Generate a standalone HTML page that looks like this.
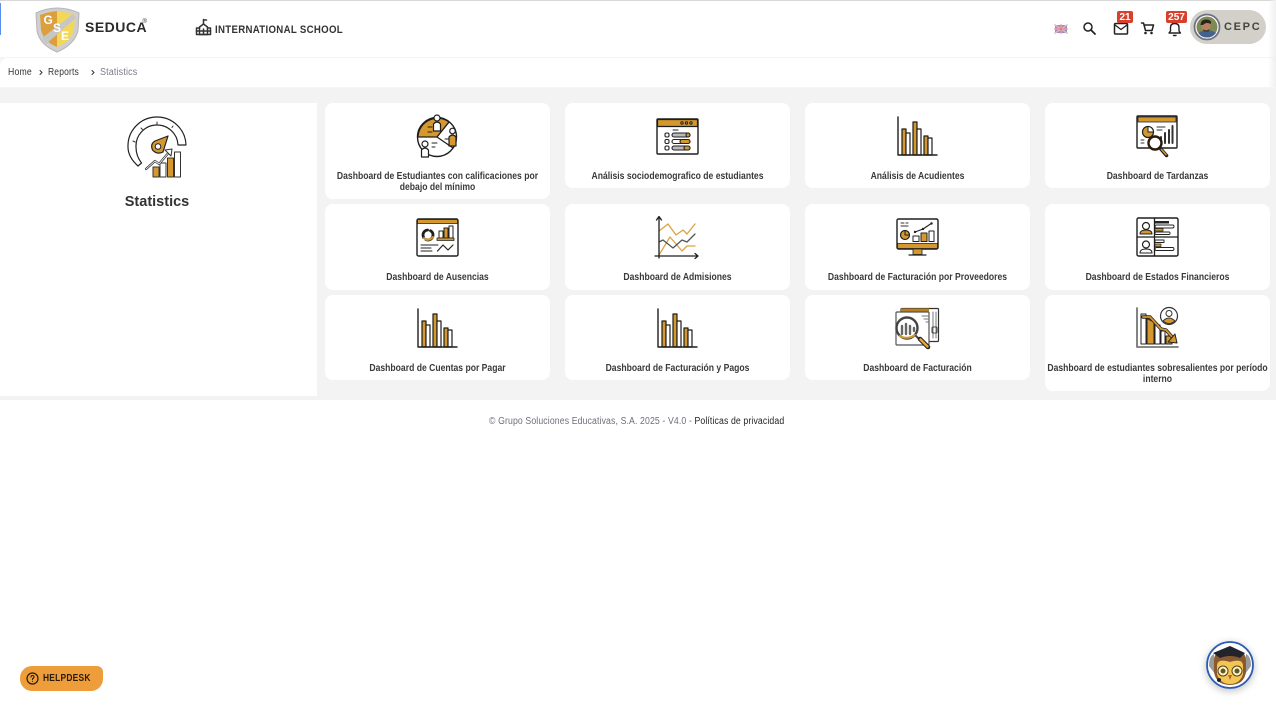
<!DOCTYPE html>
<html lang="en"><head><meta charset="utf-8"><title>Statistics</title>
<style>
*{box-sizing:border-box}
html,body{margin:0;padding:0;width:1276px;height:712px;overflow:hidden;background:#fff;font-family:"Liberation Sans",sans-serif}
.a{position:absolute}
.t{position:absolute;white-space:nowrap;line-height:1;transform-origin:0 50%}
.card{position:absolute;width:224.500px;background:#fff;border-radius:8px}
.lb{position:absolute;width:305px;margin-left:-40px;text-align:center;font-size:10.300px;line-height:11px;font-weight:700;color:#3a3a3a;white-space:nowrap;transform:scaleX(.835);transform-origin:50% 50%}
.badge{position:absolute;height:12px;background:#d8402e;border-radius:2px;color:#fff;font-size:10px;font-weight:700;line-height:13px;text-align:center}
svg{position:absolute;left:0;top:0}
</style></head><body>
<div class="a" style="left:0;top:0;width:1276px;height:1px;background:#d8d8d8"></div>
<div class="a" style="left:0;top:3px;width:1px;height:32px;background:#5b8def"></div>
<div class="a" style="left:0;top:87px;width:1276px;height:313px;background:#f3f3f3"></div>
<div class="a" style="left:0;top:57px;width:1276px;height:31px;background:#f5f5f5"></div>
<div class="a" style="left:0;top:58px;width:1276px;height:29px;background:#fff;border-radius:8px 8px 0 0"></div>
<div class="a" style="left:0;top:103px;width:317px;height:293px;background:#fff"></div>
<div class="a" style="left:1268px;top:0;width:8px;height:87px;background:linear-gradient(to right,rgba(240,240,240,0),#f0f0f0)"></div>

<div class="card" style="left:325px;top:103px;height:96px"></div>
<div class="card" style="left:565px;top:103px;height:85px"></div>
<div class="card" style="left:805px;top:103px;height:85px"></div>
<div class="card" style="left:1045px;top:103px;height:85px"></div>
<div class="card" style="left:325px;top:204px;height:86px"></div>
<div class="card" style="left:565px;top:204px;height:86px"></div>
<div class="card" style="left:805px;top:204px;height:86px"></div>
<div class="card" style="left:1045px;top:204px;height:86px"></div>
<div class="card" style="left:325px;top:295px;height:85px"></div>
<div class="card" style="left:565px;top:295px;height:85px"></div>
<div class="card" style="left:805px;top:295px;height:85px"></div>
<div class="card" style="left:1045px;top:295px;height:96px"></div>

<div class="a" style="left:20px;top:666px;width:83px;height:25px;background:#ee9d3b;border-radius:12px 6px 12px 12px"></div>
<div class="a" style="left:1206px;top:641px;width:48px;height:48px;border-radius:50%;box-shadow:0 2px 8px rgba(0,0,0,.25)"></div>
<div class="a" style="left:1190px;top:10px;width:76px;height:34px;border-radius:17px;background:#d3d0c9"></div>

<svg width="1276" height="712" viewBox="0 0 1276 712" fill="none" stroke-linecap="round" stroke-linejoin="round">
<defs>
<g id="bars" stroke="#1e1e1e" stroke-width="1.2">
<rect x="-15" y="-26" width="4" height="26" fill="#d4982f"/>
<rect x="-11" y="-22" width="4" height="22" fill="#fff"/>
<rect x="-4" y="-33" width="4" height="33" fill="#d4982f"/>
<rect x="0" y="-26" width="4" height="26" fill="#fff"/>
<rect x="7" y="-19" width="4" height="19" fill="#d4982f"/>
<rect x="11" y="-17" width="4" height="17" fill="#fff"/>
<path d="M-19-38V0H20" stroke-width="1.400"/>
</g>
</defs>

<!-- shield logo -->
<path d="M36 13Q57 3 79 13L78 31Q74 45 57 52Q40 45 37 31Z" fill="#cfcfcf" stroke="#b5b5b5"/>
<path d="M40 15Q48 12 57 11V47Q44 42 41 30Z" fill="#dc9f3e"/>
<path d="M57 11Q66 12 75 15L74 30Q70 42 57 47Z" fill="#f3d857"/>
<path d="M73 14 76 18 46 44 42 38Z" fill="#c6c6c6"/>
<text x="43.500" y="24" font-family="Liberation Sans" font-size="12" font-weight="700" fill="#fff">G</text>
<text x="53" y="32" font-family="Liberation Sans" font-size="12" font-weight="700" fill="#fff">S</text>
<text x="61" y="40" font-family="Liberation Sans" font-size="12" font-weight="700" fill="#fff">E</text>

<!-- school -->
<g stroke="#333" stroke-width="1.500">
<path d="M203.500 19.500V24M203.500 20H206.500"/><path d="M199.500 27 203.500 24 207.500 27V34.500H199.500Z"/><path d="M199.500 28H196.500V34.500H210.500V28H207.500"/><path d="M196.500 31H210.500M203.500 29V34"/>
</g>

<!-- breadcrumbs chevrons -->
<path d="M40 70.500 42 72.500 40 74.500M92 70.500 94 72.500 92 74.500" stroke="#333" stroke-width="1"/>

<!-- flag -->
<rect x="1055" y="25" width="12" height="8" fill="#8b8fc4"/>
<path d="M1055 25 1067 33M1067 25 1055 33" stroke="#e7b5bd" stroke-width="1.600"/>
<path d="M1061 25V33M1055 29H1067" stroke="#f0c3c8" stroke-width="2"/>
<path d="M1061 25V33M1055 29H1067" stroke="#c9566a" stroke-width=".8"/>

<!-- search -->
<circle cx="1088" cy="27" r="4" stroke="#222" stroke-width="1.500"/><path d="M1091 30 1095 34" stroke="#222" stroke-width="1.800"/>
<!-- mail -->
<rect x="1114.500" y="23.500" width="13" height="10.500" rx="1" stroke="#222" stroke-width="1.500"/><path d="M1115 25 1121 29.500 1127 25" stroke="#222" stroke-width="1.300"/>
<!-- cart -->
<path d="M1141.500 23H1143.500L1145.500 30.500H1152L1153.500 25H1144.500" stroke="#222" stroke-width="1.500"/>
<circle cx="1145.500" cy="33" r="1.300" fill="#222"/><circle cx="1151.500" cy="33" r="1.300" fill="#222"/>
<!-- bell -->
<path d="M1169 33H1180.500L1179 31V27.500Q1179 23.500 1174.700 23.500Q1170.500 23.500 1170.500 27.500V31Z" stroke="#222" stroke-width="1.400"/><path d="M1173.500 35.500H1176" stroke="#222" stroke-width="1.400"/>

<!-- avatar -->
<circle cx="1207" cy="27" r="13" fill="#fff"/>
<circle cx="1207" cy="27" r="12.500" stroke="#6c7284" stroke-width="1.800"/>
<circle cx="1207" cy="27" r="10.500" fill="#7d8a55"/>
<path d="M1198.500 33Q1207 27 1216 33Q1212 38 1207 37.500Q1201 37.500 1198.500 33Z" fill="#44638c"/>
<circle cx="1206" cy="26" r="4.800" fill="#b5835e"/>
<path d="M1200.500 25Q1201 19 1207 19.500Q1212 20 1211 24Q1206 21.500 1203 25Z" fill="#2a2521"/>
<path d="M1203 29Q1206 32 1209.500 29L1208.500 31.500H1204Z" fill="#3a2e26"/>

<!-- statistics icon -->
<path d="M138 166Q128 157 128 147A29 29 0 0 1 186 145H178A21 21 0 0 0 136 147Q136 156 141.500 163Z" fill="#fff" stroke="#222" stroke-width="1.200"/>
<path d="M157 122V124M141 128 142.500 129.500M133 141 135 142M173 126 172 127.500" stroke="#333" stroke-width="1"/>
<path d="M168 136 163 152Q157 155 152.500 150Q150 144 155 141Z" fill="#d4982f" stroke="#222" stroke-width="1.200"/>
<circle cx="158" cy="146.500" r="2.800" fill="#fff" stroke="#222"/>
<rect x="153" y="167" width="6" height="10" fill="#d4982f" stroke="#333"/>
<rect x="160" y="163" width="6" height="14" fill="#fff" stroke="#333"/>
<rect x="167.500" y="158" width="6" height="19" fill="#d4982f" stroke="#333"/>
<rect x="174.500" y="152" width="6" height="25" fill="#fff" stroke="#333"/>
<path d="M146 169 155 161 159 164 170 151" stroke="#333" stroke-width="2.200"/><path d="M146 169 155 161 159 164 170 151" stroke="#fff" stroke-width=".8"/>
<path d="M165 150 172 149 171 156Z" fill="#fff" stroke="#333"/>

<!-- card 1 pie -->
<circle cx="437" cy="137" r="19.500" fill="#fff" stroke="#1e1e1e" stroke-width="1.400"/>
<path d="M437 137 418 137A19.500 19.500 0 0 1 449 122Z" fill="#d4982f" stroke="#1e1e1e" stroke-width="1.200"/>
<path d="M437 137 453 148M437 137 449 122" stroke="#1e1e1e" stroke-width="1.200"/>
<circle cx="437" cy="118" r="3" fill="#fff" stroke="#1e1e1e" stroke-width="1.200"/>
<path d="M433.500 131V124Q437 120 440.500 124V131Z" fill="#fff" stroke="#1e1e1e" stroke-width="1.200"/>
<circle cx="452.500" cy="131" r="2.800" fill="#fff" stroke="#1e1e1e" stroke-width="1.200"/>
<path d="M449 146V137Q452.500 133 456 137V146Z" fill="#d4982f" stroke="#1e1e1e" stroke-width="1.200"/>
<circle cx="425" cy="144" r="3" fill="#fff" stroke="#1e1e1e" stroke-width="1.200"/>
<path d="M421.500 157V150Q425 146 428.500 150V157Z" fill="#fff" stroke="#1e1e1e" stroke-width="1.200"/>
<path d="M428 127H432M428 132H432M445 139H449M432 143H437M432 147H435" stroke="#222"/>

<!-- card 2 window -->
<rect x="657" y="119" width="41" height="35" rx="1" fill="#fff" stroke="#1e1e1e" stroke-width="1.400"/>
<rect x="657.500" y="119.500" width="40" height="7" fill="#d4982f" stroke="#1e1e1e" stroke-width="1.200"/>
<circle cx="682" cy="123" r="1.200" stroke="#222"/><circle cx="686.500" cy="123" r="1.200" stroke="#222"/><circle cx="691" cy="123" r="1.200" stroke="#222"/>
<path d="M673 130H678" stroke="#222"/>
<g stroke="#222" stroke-width="1.100">
<rect x="665" y="133" width="4" height="4" rx="1.500"/><rect x="665" y="139.500" width="4" height="4" rx="1.500"/><rect x="665" y="146" width="4" height="4" rx="1.500"/>
<rect x="672" y="133" width="18" height="4" rx="2" fill="#bbb"/><rect x="686" y="133" width="4" height="4" rx="2" fill="#d4982f"/>
<rect x="672" y="139.500" width="18" height="4" rx="2" fill="#fff"/><rect x="680" y="139.500" width="10" height="4" rx="2" fill="#d4982f"/>
<rect x="672" y="146" width="18" height="4" rx="2" fill="#bbb"/><rect x="684" y="146" width="6" height="4" rx="2" fill="#d4982f"/>
</g>

<!-- bars -->
<use href="#bars" transform="translate(917 155)"/>
<use href="#bars" transform="translate(437 347)"/>
<use href="#bars" transform="translate(677 347)"/>

<!-- tardanzas -->
<rect x="1137" y="116" width="40" height="32" rx="1" fill="#fff" stroke="#1e1e1e" stroke-width="1.400"/>
<rect x="1138" y="117" width="38" height="5" fill="#d4982f" stroke="#1e1e1e" stroke-width=".8"/>
<circle cx="1148" cy="132" r="5.500" fill="#d4982f" stroke="#1e1e1e" stroke-width="1.200"/><path d="M1148 126.500V132H1153.500A5.500 5.500 0 0 0 1148 126.500Z" fill="#fff" stroke="#1e1e1e"/>
<path d="M1157 127H1165M1157 130H1162M1141 140H1144M1141 143H1144" stroke="#333"/>
<path d="M1161 143V137M1165 143V133M1169 143V130M1172.500 143V126" stroke="#333" stroke-width="2"/>
<circle cx="1155" cy="143" r="6.500" fill="#fff" stroke="#2a1c08" stroke-width="2.400"/>
<path d="M1160 148 1166.500 155.500" stroke="#1e1e1e" stroke-width="3.500"/><path d="M1161.500 149.500 1166 154.500" stroke="#d4982f" stroke-width="1.600"/>

<!-- ausencias -->
<rect x="417" y="219" width="41" height="37" rx="1.500" fill="#fff" stroke="#1e1e1e" stroke-width="1.400"/>
<rect x="417.500" y="219.500" width="40" height="4" fill="#d4982f" stroke="#1e1e1e" stroke-width=".8"/>
<circle cx="428" cy="235" r="5" stroke="#1e1e1e" stroke-width="2.800" stroke-dasharray="10 3"/>
<path d="M424 238Q428 242 433 237" stroke="#d4982f" stroke-width="2"/>
<rect x="439" y="231" width="4" height="7" fill="#fff" stroke="#222"/><rect x="444" y="228" width="4" height="10" fill="#d4982f" stroke="#222"/><rect x="449" y="226" width="4" height="12" fill="#fff" stroke="#222"/>
<rect x="437" y="238" width="17" height="2.500" fill="#d4982f" stroke="#222" stroke-width=".8"/>
<path d="M421 245H438M421 248H431M421 251H432" stroke="#222"/>
<path d="M437.500 251 443 245 448 250 453 245" stroke="#222" stroke-width="1.200"/>

<!-- admisiones -->
<path d="M659 231 668 224 676 235 683 230 687 234 695 224" stroke="#d9a441" stroke-width="1.300"/>
<path d="M659 255 670 237 682 251 687 246 695 246" stroke="#d9a441" stroke-width="1.300"/>
<path d="M659 242 663 240 673 248 682 240 687 242 695 234" stroke="#555" stroke-width="1.300"/>
<path d="M659 258V217M656.500 220 659 216.500 661.500 220M655 256H698M695 253.500 698 256 695 258.500" stroke="#1e1e1e" stroke-width="1.300"/>

<!-- proveedores -->
<rect x="897" y="219" width="41" height="30" rx="1.500" fill="#fff" stroke="#1e1e1e" stroke-width="1.400"/>
<rect x="897.500" y="243.500" width="40" height="5" fill="#d4982f" stroke="#1e1e1e" stroke-width=".8"/>
<rect x="913" y="249" width="9" height="5.500" fill="#d4982f" stroke="#222" stroke-width=".8"/><path d="M909 255H926" stroke="#222" stroke-width="1.200"/>
<circle cx="905" cy="235" r="4.500" fill="#d4982f" stroke="#1e1e1e" stroke-width="1.200"/><path d="M905 230.500V235H909.500" stroke="#1e1e1e"/>
<path d="M901 223H904M906 223H908M901 226H908" stroke="#333"/>
<rect x="913" y="236" width="6" height="5.500" fill="#fff" stroke="#222"/><rect x="921" y="233" width="6" height="8.500" fill="#d4982f" stroke="#222"/><rect x="929" y="231" width="5" height="10.500" fill="#fff" stroke="#222"/>
<path d="M915 232 923 229 932 223" stroke="#222" stroke-width="1.100"/>
<circle cx="915" cy="232" r="1.200" fill="#222"/><circle cx="923" cy="229" r="1.200" fill="#222"/><circle cx="931.500" cy="223.500" r="1.200" fill="#222"/>

<!-- estados -->
<rect x="1137" y="218" width="41" height="38" rx="1.500" fill="#fff" stroke="#1e1e1e" stroke-width="1.400"/>
<path d="M1154.500 218V256M1137 237H1178" stroke="#1e1e1e" stroke-width="1.300"/>
<circle cx="1146" cy="226" r="3.500" stroke="#222" stroke-width="1.200"/><path d="M1140 234Q1140 230 1146 230Q1152 230 1152 234Z" fill="#d4982f" stroke="#222"/>
<circle cx="1146" cy="244.500" r="3.500" stroke="#222" stroke-width="1.200"/><path d="M1140 253Q1140 249 1146 249Q1152 249 1152 253Z" fill="#fff" stroke="#222"/>
<rect x="1155" y="221" width="14" height="2.500" fill="#222"/>
<rect x="1155" y="225" width="19" height="3" rx="1.500" fill="#fff" stroke="#222" stroke-width=".9"/><rect x="1155" y="228.500" width="8" height="2.500" fill="#d4982f" stroke="#222" stroke-width=".7"/>
<rect x="1155" y="232" width="15" height="2.500" rx="1" fill="#fff" stroke="#222" stroke-width=".9"/>
<rect x="1155" y="240" width="9" height="2.500" fill="#fff" stroke="#222" stroke-width=".9"/><rect x="1155" y="244" width="6" height="2.500" fill="#d4982f" stroke="#222" stroke-width=".7"/>
<rect x="1155" y="247.500" width="19" height="3" rx="1.500" fill="#fff" stroke="#222" stroke-width=".9"/>

<!-- facturacion -->
<rect x="901" y="308.500" width="37.500" height="33" rx="1" fill="#fff" stroke="#333" stroke-width="1.200"/>
<rect x="901" y="308.500" width="28" height="3" fill="#b87f1f"/>
<rect x="896" y="312" width="33" height="33" rx="1" fill="#fff" stroke="#555" stroke-width="1.200"/>
<path d="M922 316H929M924 319H929M926 322H929M933 312V338M936 312V338" stroke="#777"/>
<rect x="932" y="327" width="5" height="6" rx="1" stroke="#444"/>
<circle cx="907" cy="328" r="10.500" fill="#fff" stroke="#444" stroke-width="2.400"/>
<path d="M902 334V326M906 334V324M910 334V326M914 331V328" stroke="#666" stroke-width="2.400"/>
<path d="M900 336Q907 340 915 335" stroke="#d4982f" stroke-width="2"/>
<path d="M916 336 921 341" stroke="#444" stroke-width="2"/>
<path d="M920 339 928 347" stroke="#222" stroke-width="4.500"/><path d="M920.500 339.500 927.500 346.500" stroke="#e0a545" stroke-width="2.500"/>

<!-- sobresalientes -->
<path d="M1137 308V347H1178" stroke="#777" stroke-width="1.800"/>
<path d="M1141 314H1146V344H1141Z" fill="#fff" stroke="#222"/>
<path d="M1146 318 1154 322V344H1147V318Z" fill="#d4982f" stroke="#222"/>
<path d="M1155 325H1160V344H1155ZM1161 331H1165V344H1161Z" fill="#fff" stroke="#222"/>
<path d="M1166 336H1172V344H1166Z" fill="#d4982f" stroke="#222"/>
<path d="M1143 317 1150 317 1161 329 1166 330 1173 338" stroke="#222" stroke-width="3.400"/>
<path d="M1143 317 1150 317 1161 329 1166 330 1173 338" stroke="#d4982f" stroke-width="1.800"/>
<path d="M1168 342 1177 343 1175 334Z" fill="#d4982f" stroke="#222"/>
<circle cx="1169" cy="316" r="8.500" fill="#fff" stroke="#333" stroke-width="1.200"/>
<circle cx="1169" cy="313.500" r="3" stroke="#333"/>
<path d="M1163 321Q1169 315 1175 321Q1169 326 1163 321Z" fill="#d4982f" stroke="#333"/>

<!-- helpdesk icon -->
<circle cx="32.500" cy="678.500" r="5.500" stroke="#2a1c08" stroke-width="1.200"/>
<path d="M31 677Q31 675.500 32.500 675.500Q34.200 675.500 34 677Q33.800 678 32.500 678.700V679.500M32.500 681.300V681.400" stroke="#2a1c08" stroke-width="1.100"/>

<!-- owl -->
<circle cx="1230" cy="665" r="24" fill="#fff"/>
<circle cx="1230" cy="665" r="23" stroke="#2a5cb0" stroke-width="1.800"/>
<path d="M1209 666Q1209 656 1214 654L1215 674ZM1251 666Q1251 656 1246 654L1245 674Z" fill="#9a9a9a"/>
<path d="M1214 660Q1214 650 1230 649Q1246 650 1246 660V672Q1244 685 1230 685Q1216 685 1214 672Z" fill="#8a5a2f"/>
<path d="M1217 666Q1217 658 1230 662Q1243 658 1243 666V674Q1240 684 1230 684Q1220 684 1217 674Z" fill="#f2c655"/>
<circle cx="1223" cy="671" r="5" fill="#fff4c4" stroke="#5b3c1a"/><circle cx="1237" cy="671" r="5" fill="#fff4c4" stroke="#5b3c1a"/>
<circle cx="1223" cy="671" r="2.500" fill="#5a5a22"/><circle cx="1237" cy="671" r="2.500" fill="#5a5a22"/>
<path d="M1228 675H1232L1230 680Z" fill="#b06a26"/>
<path d="M1230 646 1245 653 1240 658Q1230 654 1220 658L1213 653Z" fill="#22242c"/>
<circle cx="1219" cy="680" r="2" fill="#222"/>
</svg>

<div class="t" style="left:85px;top:19.500px;font-size:14px;font-weight:700;color:#2b2b2b;letter-spacing:.5px">SEDUCA</div>
<div class="t" style="left:142.500px;top:18.500px;font-size:6px;color:#2b2b2b">®</div>
<div class="t" style="left:215px;top:24.500px;font-size:11px;font-weight:700;color:#333;letter-spacing:.35px;transform:scaleX(.877)">INTERNATIONAL SCHOOL</div>
<div class="t" style="left:7.500px;top:67.500px;font-size:10px;color:#333;letter-spacing:.2px;transform:scaleX(.87)">Home</div>
<div class="t" style="left:47.500px;top:67.500px;font-size:10px;color:#333;letter-spacing:.2px;transform:scaleX(.85)">Reports</div>
<div class="t" style="left:100px;top:67.500px;font-size:10px;color:#7b7b8d;letter-spacing:.15px;transform:scaleX(.9)">Statistics</div>
<div class="badge" style="left:1117px;top:11px;width:16px">21</div>
<div class="badge" style="left:1166px;top:11px;width:21px">257</div>
<div class="t" style="left:1224px;top:21.500px;font-size:11px;font-weight:700;color:#444;letter-spacing:1.700px">CEPC</div>
<div class="t" style="left:0;width:314px;text-align:center;top:195px;font-size:14.500px;font-weight:700;color:#333">Statistics</div>

<div class="lb" style="left:325px;top:171px">Dashboard de Estudiantes con calificaciones por<br>debajo del mínimo</div>
<div class="lb" style="left:565px;top:171px">Análisis sociodemografico de estudiantes</div>
<div class="lb" style="left:805px;top:171px">Análisis de Acudientes</div>
<div class="lb" style="left:1045px;top:171px">Dashboard de Tardanzas</div>
<div class="lb" style="left:325px;top:272px">Dashboard de Ausencias</div>
<div class="lb" style="left:565px;top:272px">Dashboard de Admisiones</div>
<div class="lb" style="left:805px;top:272px">Dashboard de Facturación por Proveedores</div>
<div class="lb" style="left:1045px;top:272px">Dashboard de Estados Financieros</div>
<div class="lb" style="left:325px;top:363px">Dashboard de Cuentas por Pagar</div>
<div class="lb" style="left:565px;top:363px">Dashboard de Facturación y Pagos</div>
<div class="lb" style="left:805px;top:363px">Dashboard de Facturación</div>
<div class="lb" style="left:1045px;top:363px">Dashboard de estudiantes sobresalientes por período<br>interno</div>

<div class="t" style="left:489px;top:417px;font-size:10px;color:#6e6e7e;letter-spacing:.14px;transform:scaleX(.87)">© Grupo Soluciones Educativas, S.A. 2025 - V4.0 - <span style="color:#222">Políticas de privacidad</span></div>
<div class="t" style="left:43px;top:673px;font-size:10.500px;font-weight:700;color:#2a1c08;letter-spacing:.3px;transform:scaleX(.8)">HELPDESK</div>
</body></html>
